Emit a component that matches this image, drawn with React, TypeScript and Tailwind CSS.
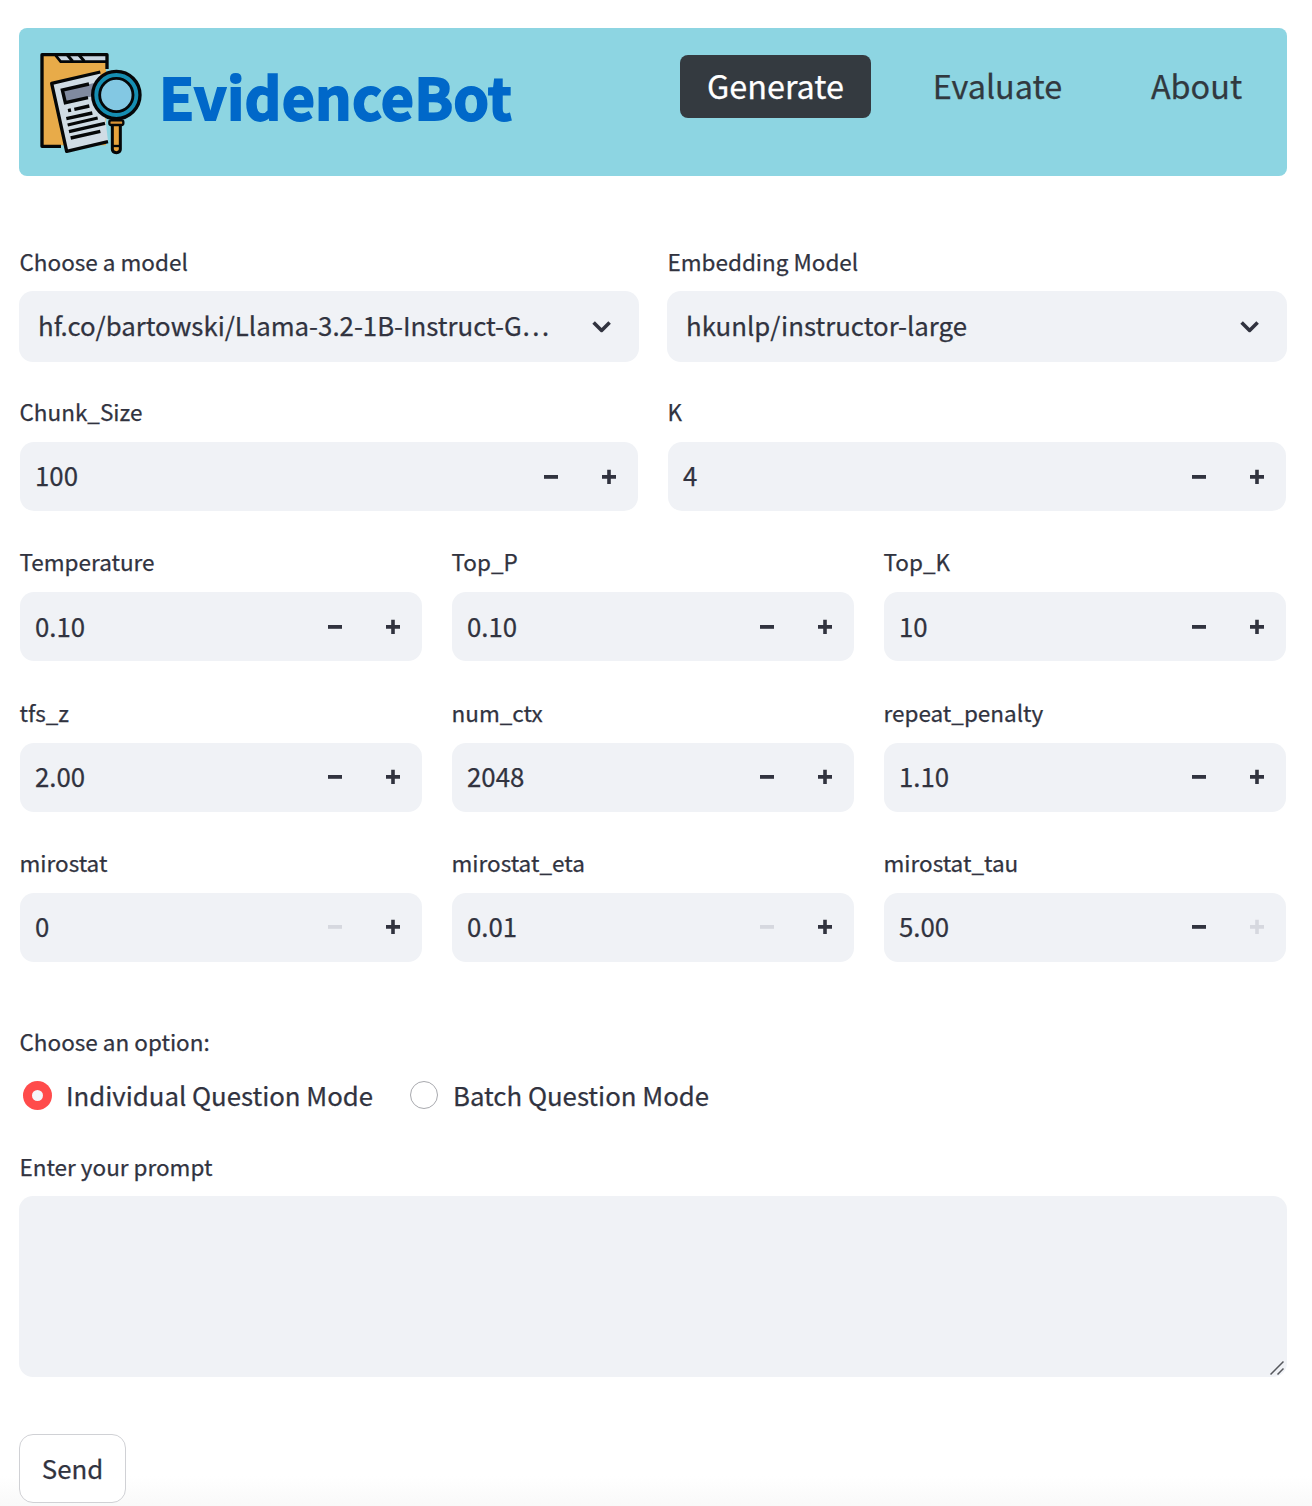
import React from "react";

function Logo() {
  return (
    <svg viewBox="87 93 315 315" className="h-[105px] w-[105px] shrink-0" fill="none" stroke="#050708" strokeWidth="10">
      <path d="M97 105H288V376H97Z" fill="#e8ab49" stroke="none" />
      <path d="M136 105H288V127H151Z" fill="#c9d6e2" stroke="none" />
      <path d="M153 379H96V104H291V147" strokeLinejoin="round" />
      <path d="M137 106L152 125H291" strokeWidth="8" />
      <path d="M172 105L188 124M207 105L223 124" strokeWidth="9" />
      <path d="M126 190L270 157L294 364L170 394Z" fill="#d0dce5" stroke="none" />
      <path d="M156 212L252 189V228L164 248Z" fill="#808a9f" stroke="none" />
      <path d="M271 156L125 190L170 394L294 365" strokeLinejoin="round" />
      <path d="M237 192L157 210L166 248L234 233" />
      <path d="M174 272L183 270M193 268L238 258M169 296L247 279M173 315L263 294M177 335L285 310M182 354L271 334" />
      <path d="M307 312H331V388Q331 398 319 398Q307 398 307 388Z" fill="#e8a33c" strokeLinejoin="round" strokeWidth="9" />
      <path d="M306 378H332" strokeWidth="7" />
      <rect x="298" y="301" width="42" height="14" rx="5" fill="#dc9435" strokeWidth="7" />
      <circle cx="319" cy="225" r="71" fill="#168eb2" />
      <circle cx="319" cy="225" r="50" fill="#83c8e3" strokeWidth="8.5" />
    </svg>
  );
}

function Chevron() {
  return (
    <svg viewBox="0 0 20 20" className="h-5 w-5" fill="none" stroke="#31333f" strokeWidth="3.6">
      <path d="M1.6 5.4L9.6 13.4L17.6 5.4" strokeLinejoin="round" />
    </svg>
  );
}

function Label({ children }: { children: React.ReactNode }) {
  return <div className="h-[49px] whitespace-nowrap pl-[0.5px] text-[22.5px] leading-[38px]">{children}</div>;
}

function SelectField({ label, value }: { label: string; value: string }) {
  return (
    <div className="min-w-0">
      <Label>{label}</Label>
      <div className="flex h-[71px] items-center justify-between rounded-[14px] bg-[#f0f2f6] pl-[19px] pr-[27px] text-[25.8px]">
        <span className="whitespace-nowrap pb-[4px] leading-[66px]">{value}</span>
        <Chevron />
      </div>
    </div>
  );
}

function Step({ plus = false, disabled = false }: { plus?: boolean; disabled?: boolean }) {
  return (
    <button className="flex h-full w-[58px] items-center justify-center">
      <svg viewBox="0 0 16 16" className="h-4 w-4" fill={disabled ? "#d6d8df" : "#31333f"}>
        <path d={plus ? "M1 6H6.2V0.8H9.8V6H15V9.8H9.8V15H6.2V9.8H1Z" : "M1 6H15V9.8H1Z"} />
      </svg>
    </button>
  );
}

type NumProps = { label: string; value: string; noMinus?: boolean; noPlus?: boolean };

function NumberField({ label, value, noMinus, noPlus }: NumProps) {
  return (
    <div>
      <Label>{label}</Label>
      <div className="mx-px mt-px flex h-[69px] items-center rounded-[14px] bg-[#f0f2f6] pl-[15px] text-[25.8px]">
        <span className="flex-1 pb-[3.7px] leading-[65px]">{value}</span>
        <Step disabled={noMinus} />
        <Step plus disabled={noPlus} />
      </div>
    </div>
  );
}

const rows: NumProps[][] = [
  [{ label: "Temperature", value: "0.10" }, { label: "Top_P", value: "0.10" }, { label: "Top_K", value: "10" }],
  [{ label: "tfs_z", value: "2.00" }, { label: "num_ctx", value: "2048" }, { label: "repeat_penalty", value: "1.10" }],
  [
    { label: "mirostat", value: "0", noMinus: true },
    { label: "mirostat_eta", value: "0.01", noMinus: true },
    { label: "mirostat_tau", value: "5.00", noPlus: true },
  ],
];

export default function App() {
  return (
    <div className="h-[1506px] overflow-hidden bg-gradient-to-b from-white from-[98%] to-[#f9f9f9] px-[19px] pr-[25px] pt-7 font-['Noto_Sans_CJK_SC',sans-serif] text-[#31333f] [-webkit-text-stroke:0.25px]">
      <header className="flex h-[148px] justify-between rounded-[8px] bg-[#8dd5e2]">
        <div className="flex pl-5 pt-[23px]">
          <Logo />
          <h1 className="-mt-1 ml-[15px] h-[96px] text-[57.2px] font-bold leading-[96px] tracking-[0.25px] text-[#0068c9] [-webkit-text-stroke:1.8px_#0068c9]">EvidenceBot</h1>
        </div>
        <nav className="mr-[18px] mt-[27px] flex h-[63px] text-[32.4px] leading-[59px] text-[#31393f]">
          <a className="w-[191px] rounded-[8px] bg-[#343a40] text-center text-white">Generate</a>
          <a className="ml-[35px] w-[183px] text-center">Evaluate</a>
          <a className="ml-[35px] w-[145px] text-center">About</a>
        </nav>
      </header>

      <main className="pt-[66px]">
        <div className="grid grid-cols-2 gap-x-7">
          <div className="h-[150.2px]"><SelectField label="Choose a model" value="hf.co/bartowski/Llama-3.2-1B-Instruct-G…" /></div>
          <div className="h-[150.2px]"><SelectField label="Embedding Model" value="hkunlp/instructor-large" /></div>
          <div className="h-[150.2px]"><NumberField label="Chunk_Size" value="100" /></div>
          <div className="h-[150.2px]"><NumberField label="K" value="4" /></div>
        </div>
        {rows.map((row, i) => (
          <div key={i} className="grid h-[150.2px] grid-cols-3 gap-x-7">
            {row.map((f) => (
              <NumberField key={f.label} {...f} />
            ))}
          </div>
        ))}

        <div className="pt-[29px]">
          <div className="h-[52px] pl-[0.5px] text-[22.5px] leading-[38px]">Choose an option:</div>
          <div className="flex h-[42px] items-center pl-1 text-[25.75px] leading-[42px]">
            <span className="mt-[2px] flex h-[29px] w-[29px] items-center justify-center rounded-full bg-[#ff4b4b]">
              <span className="h-[11px] w-[11px] rounded-full bg-[#f5f6fa]" />
            </span>
            <span className="ml-[14px] w-[308px] whitespace-nowrap">Individual Question Mode</span>
            <span className="ml-[36px] mt-px h-[28px] w-[28px] rounded-full border-[1.5px] border-[#a8a9ae] bg-white" />
            <span className="ml-[15px] whitespace-nowrap">Batch Question Mode</span>
          </div>
        </div>

        <div className="pt-[31px]">
          <Label>Enter your prompt</Label>
          <div className="flex h-[181px] items-end justify-end rounded-[14px] bg-[#f0f2f6] pb-[2px] pr-[3px]">
            <svg viewBox="0 0 14 14" className="h-[14px] w-[14px]" stroke="#55575c" strokeWidth="1.5">
              <path d="M0.5 13.5L13.5 0.5M7.5 13.5L13.5 7.5" />
            </svg>
          </div>
        </div>

        <button className="mt-[57px] flex h-[69px] w-[107px] items-center justify-center rounded-[14px] border border-[#d0d1d5] bg-white pb-px text-[25.8px]">
          Send
        </button>
      </main>
    </div>
  );
}
